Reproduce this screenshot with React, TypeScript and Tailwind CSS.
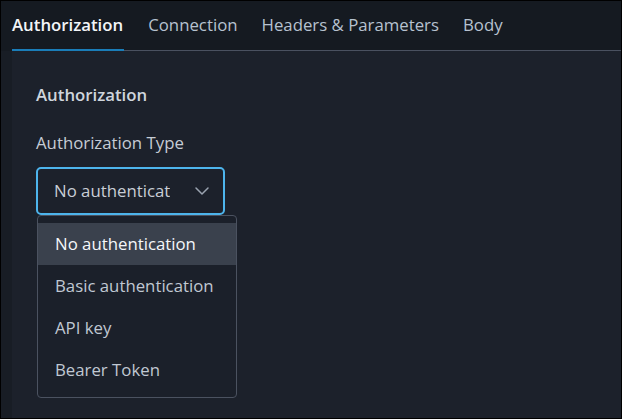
import { ChevronDown } from "lucide-react";

const tabs = ["Authorization", "Connection", "Headers & Parameters", "Body"];
const options = ["No authentication", "Basic authentication", "API key", "Bearer Token"];

export default function App() {
    const active = "Authorization";
    const selected = "No authentication";

    return (
        <div
            className="w-[622px] h-[419px] border border-black bg-[#181d25] flex flex-col overflow-hidden text-[16.8px]"
            style={{ fontFamily: '"Open Sans", "Noto Sans", sans-serif' }}
        >
            {/* Tabs */}
            <div className="bg-[#151a21] pl-[11px]">
                <div className="flex gap-6 border-b border-[#4a5160] h-[50px]">
                    {tabs.map((tab) => (
                        <button
                            key={tab}
                            className={
                                tab === active
                                    ? "-mb-px pr-px border-b-2 border-[#1a7db8] font-semibold text-[#f3f5f8] leading-6"
                                    : "-mb-px border-b-2 border-transparent text-[#b7c2d0] leading-6"
                            }
                        >
                            {tab}
                        </button>
                    ))}
                </div>
            </div>

            {/* Panel */}
            <div className="flex-1 ml-[11px] bg-[#1c212b] pl-6 pt-8">
                <h2 className="leading-6 font-semibold text-[#cfd5dd]">Authorization</h2>
                <label className="block mt-6 leading-6 text-[#c6ccd5]">Authorization Type</label>
                <div className="relative mt-3 w-[189px]">
                    <button className="w-full h-[48px] flex items-center justify-between pl-4 pr-[9px] border-2 border-[#4db4ec] rounded-[5px] bg-[#1c212b] text-[#c9ced6]">
                        <span className="truncate">No authenticat</span>
                        <ChevronDown size={24} strokeWidth={1.5} className="text-[#9aa3b0] shrink-0" />
                    </button>
                    <div className="absolute left-px top-[48px] w-[200px] h-[183px] pt-[7px] border border-[#4b5260] rounded-[4px] bg-[#1b202a]">
                        {options.map((opt) => (
                            <div
                                key={opt}
                                className={
                                    opt === selected
                                        ? "h-[42px] flex items-center pl-[17px] bg-[#3a414d] text-[#f5f7fa]"
                                        : "h-[42px] flex items-center pl-[17px] text-[#c0c8d3]"
                                }
                            >
                                {opt}
                            </div>
                        ))}
                    </div>
                </div>
            </div>
        </div>
    );
}
